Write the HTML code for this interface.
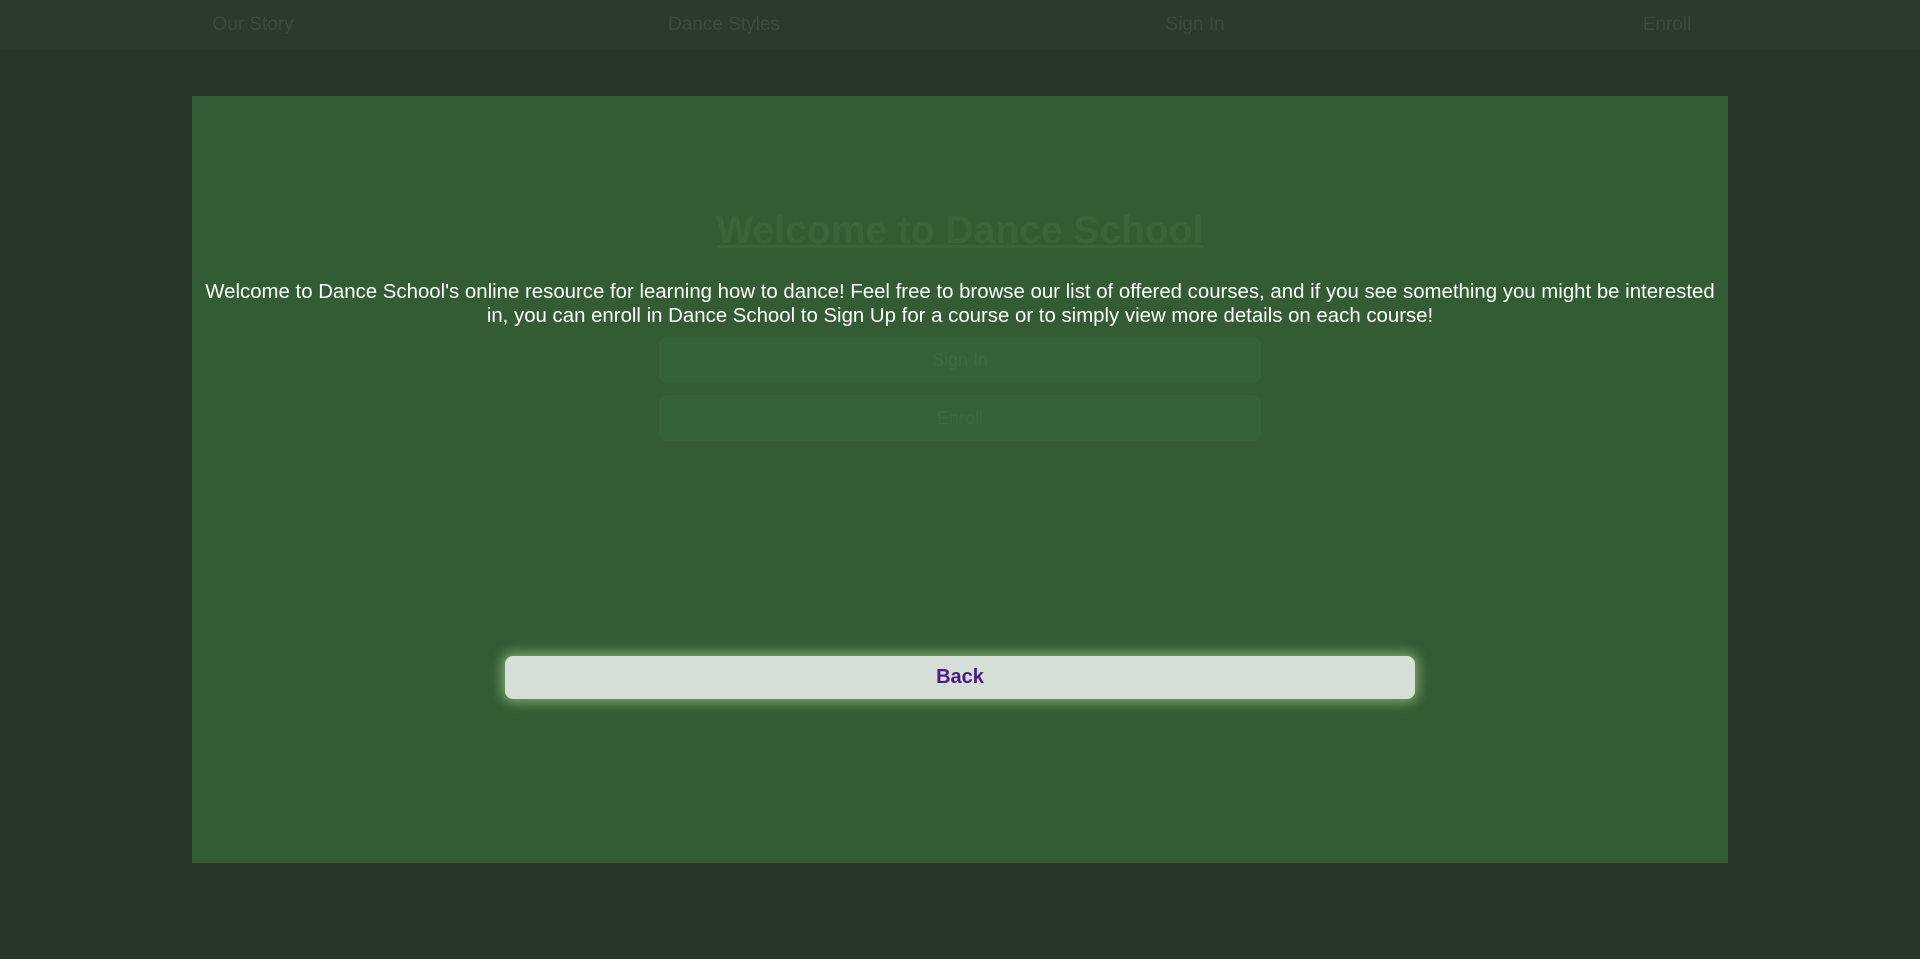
<!DOCTYPE html>
<html><head><style>
html,body{margin:0;padding:0;width:1920px;height:959px;overflow:hidden;background:#283529;font-family:"Liberation Sans",sans-serif;}
.nav{position:absolute;left:0;top:0;width:1920px;height:50px;background:linear-gradient(#2c392d 0,#2c392d 40px,#283529 70px);}
.nav span{position:absolute;top:14px;font-size:19px;color:#3d4a3e;transform:translateX(-50%);}
.panel{position:absolute;left:192px;top:96px;width:1536px;height:767px;background:#325c34;}
.outer{position:absolute;left:188px;top:28px;width:1158px;height:450px;background:rgba(60,100,62,0.08);border-radius:10px;}
.inner{position:absolute;left:237px;top:54px;width:1062px;height:333px;background:rgba(60,100,62,0.1);border-radius:10px;}
.h{position:absolute;left:0;width:1536px;top:113px;text-align:center;font-size:39px;font-weight:bold;color:#396539;text-decoration:underline;}
.fb{position:absolute;left:467px;width:602px;height:46px;background:#35623a;border-radius:8px;text-align:center;line-height:46px;font-size:18px;color:#3c6a3f;}
.txt{position:absolute;left:0;top:184px;width:1536px;text-align:center;color:#fff;font-size:20.4px;line-height:24px;}
.back{position:absolute;left:313px;top:560px;width:910px;height:43px;background:#d5dfd8;border-radius:8px;box-shadow:0 0 12px 3px rgba(200,230,160,0.55);text-align:center;line-height:43px;color:#4b1a82;font-weight:bold;font-size:20px;}
</style></head><body>
<div class="nav">
<span style="left:253px">Our Story</span>
<span style="left:724px">Dance Styles</span>
<span style="left:1195px">Sign In</span>
<span style="left:1667px">Enroll</span>
</div>
<div class="panel">
<div class="outer"></div>
<div class="inner"></div>
<div class="h">Welcome to Dance School</div>
<div class="fb" style="top:241px">Sign In</div>
<div class="fb" style="top:299px">Enroll</div>
<div class="txt">Welcome to Dance School's online resource for learning how to dance! Feel free to browse our list of offered courses, and if you see something you might be interested<br>in, you can enroll in Dance School to Sign Up for a course or to simply view more details on each course!</div>
<div class="back">Back</div>
</div>
</body></html>
